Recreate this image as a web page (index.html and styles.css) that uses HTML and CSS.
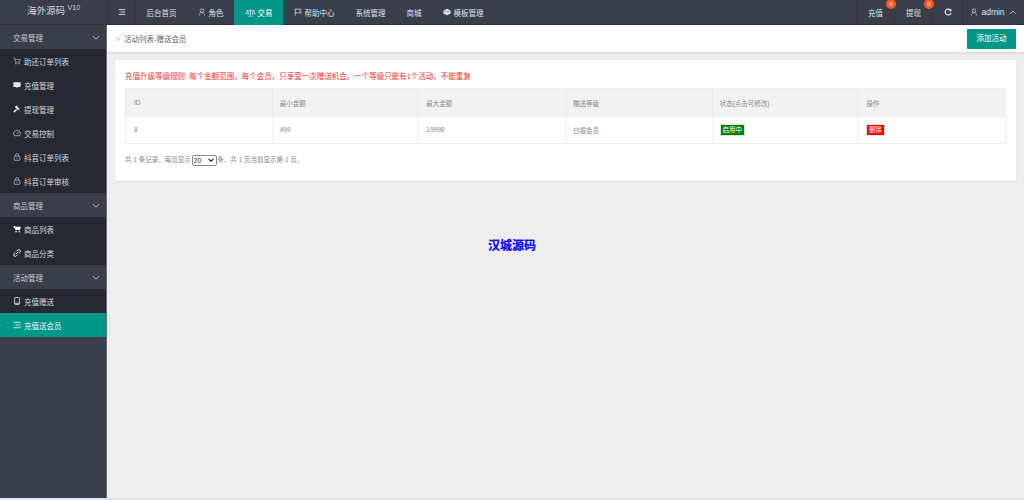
FILE: index.html
```html
<!DOCTYPE html>
<html lang="zh-CN">
<head>
    <meta charset="UTF-8">
    <meta name="viewport" content="width=device-width, initial-scale=1.0">
    <title>活动列表-赠送会员</title>
    <link rel="stylesheet" href="styles.css">
</head>
<body>

<div class="layout">
    <header class="topbar">
        <div class="logo">海外源码 <sup>V10</sup></div>
        <button class="toggle" aria-label="菜单">
            <svg class="icon" viewBox="0 0 10 10"><path d="M1 2h8M3 5h6M1 8h8" stroke="#dfe1e6" stroke-width="1.1" fill="none"/></svg>
        </button>
        <nav class="top-nav">
            <a href="#">后台首页</a>
            <a href="#"><svg class="icon" viewBox="0 0 10 10"><circle cx="5" cy="3.2" r="2.2" stroke="#dfe1e6" fill="none" stroke-width=".8"/><path d="M1.5 9.5C2 6.8 3.2 5.6 5 5.6s3 1.2 3.5 3.9" stroke="#dfe1e6" fill="none" stroke-width=".8"/></svg>角色</a>
            <a href="#" class="active"><svg class="icon wide" viewBox="0 0 14 10"><path d="M7 1v7M4 9h6M2 2h10M3 2 1 6h4zM11 2 9 6h4z" stroke="#fff" fill="none" stroke-width=".8"/></svg>交易</a>
            <a href="#"><svg class="icon" viewBox="0 0 10 10"><path d="M1.5 1v8.5M1.5 1.5h7.5L7.5 3.5 9 6H1.5" stroke="#dfe1e6" fill="none" stroke-width=".9"/></svg>帮助中心</a>
            <a href="#">系统管理</a>
            <a href="#">商城</a>
            <a href="#"><svg class="icon" viewBox="0 0 10 10"><path d="M5 1 9.5 3v4L5 9 .5 7V3z" fill="#dfe1e6"/><path d="M.5 3 5 5l4.5-2" stroke="#3a3d4a" fill="none" stroke-width=".5"/></svg>模板管理</a>
        </nav>
        <div class="top-right">
            <a href="#" class="cell">充值<span class="badge">0</span></a>
            <a href="#" class="cell">提现<span class="badge">0</span></a>
            <a href="#" class="cell refresh"><svg class="icon" viewBox="0 0 10 10"><path d="M8.3 3.2A3.7 3.7 0 1 0 8.7 6" stroke="#fff" fill="none" stroke-width="1.3"/><path d="M9.2.8v3.4H5.8z" fill="#fff"/></svg></a>
            <a href="#" class="cell user"><svg class="icon" viewBox="0 0 10 10"><circle cx="5" cy="3.2" r="2.2" stroke="#dfe1e6" fill="none" stroke-width=".8"/><path d="M1.5 9.5C2 6.8 3.2 5.6 5 5.6s3 1.2 3.5 3.9" stroke="#dfe1e6" fill="none" stroke-width=".8"/></svg>admin<svg class="chev" viewBox="0 0 10 6"><path d="M1 5l4-4 4 4" stroke="#dfe1e6" fill="none" stroke-width=".9"/></svg></a>
        </div>
    </header>

    <div class="body-row">
        <aside class="sidebar">
            <div class="group">交易管理<svg class="chev" viewBox="0 0 10 6"><path d="M1 1l4 4 4-4" stroke="#c9ccd4" fill="none" stroke-width="1"/></svg></div>
            <a href="#" class="item"><svg class="icon" viewBox="0 0 10 10"><path d="M.5 1.5h1.6l1 5h5l1-3.5H2.6" stroke="#d5d7dd" fill="none" stroke-width=".7"/><circle cx="3.6" cy="8.4" r=".8" fill="#d5d7dd"/><circle cx="7.6" cy="8.4" r=".8" fill="#d5d7dd"/></svg>助还订单列表</a>
            <a href="#" class="item"><svg class="icon" viewBox="0 0 10 10"><path d="M.5 1.5h9v6H6l-1 1.5-1-1.5H.5z" fill="#e4e6ea"/></svg>充值管理</a>
            <a href="#" class="item"><svg class="icon" viewBox="0 0 10 10"><path d="M4 .8 8 4.6 6.4 6.2 2.6 2.4zM4 5 .6 8.4l1 1L5 6zM7.5 6.5 9.5 8.5" fill="#fff" stroke="#fff" stroke-width=".4"/></svg>提现管理</a>
            <a href="#" class="item"><svg class="icon" viewBox="0 0 10 10"><path d="M1.6 8.4a4.3 4.3 0 1 1 6.8 0z" stroke="#d5d7dd" fill="none" stroke-width=".8"/><path d="M4.6 6.4 7 3.8" stroke="#d5d7dd" stroke-width=".8"/></svg>交易控制</a>
            <a href="#" class="item"><svg class="icon" viewBox="0 0 10 10"><rect x="1.5" y="4" width="7" height="5.2" rx=".8" stroke="#d5d7dd" fill="none" stroke-width=".8"/><path d="M3 4V2.8a2 2 0 0 1 4 0V4M5 6v1.4" stroke="#d5d7dd" fill="none" stroke-width=".8"/></svg>抖音订单列表</a>
            <a href="#" class="item"><svg class="icon" viewBox="0 0 10 10"><rect x="1.5" y="4" width="7" height="5.2" rx=".8" stroke="#d5d7dd" fill="none" stroke-width=".8"/><path d="M3 4V2.8a2 2 0 0 1 4 0V4M5 6v1.4" stroke="#d5d7dd" fill="none" stroke-width=".8"/></svg>抖音订单审核</a>
            <div class="group">商品管理<svg class="chev" viewBox="0 0 10 6"><path d="M1 1l4 4 4-4" stroke="#c9ccd4" fill="none" stroke-width="1"/></svg></div>
            <a href="#" class="item"><svg class="icon" viewBox="0 0 10 10"><path d="M.3 1.3h2l.4 1h7l-1 4H3.2z" fill="#fff"/><circle cx="3.8" cy="8.3" r="1" fill="#fff"/><circle cx="7.8" cy="8.3" r="1" fill="#fff"/></svg>商品列表</a>
            <a href="#" class="item"><svg class="icon" viewBox="0 0 10 10"><path d="M4.4 2.8 5.8 1.4a1.9 1.9 0 0 1 2.8 2.8L7.2 5.6M5.6 7.2 4.2 8.6A1.9 1.9 0 0 1 1.4 5.8L2.8 4.4M3.6 6.4l2.8-2.8" stroke="#fff" fill="none" stroke-width="1.2"/></svg>商品分类</a>
            <div class="group">活动管理<svg class="chev" viewBox="0 0 10 6"><path d="M1 1l4 4 4-4" stroke="#c9ccd4" fill="none" stroke-width="1"/></svg></div>
            <a href="#" class="item"><svg class="icon" viewBox="0 0 10 10"><rect x="2" y=".6" width="6" height="8.8" rx=".9" stroke="#e4e6ea" fill="none" stroke-width="1"/><path d="M2 7.8h6" stroke="#e4e6ea" stroke-width="1"/></svg>充值赠送</a>
            <a href="#" class="item current"><svg class="icon" viewBox="0 0 10 10"><path d="M.5 1.6h9M3 5h6.5M.5 8.4h9M.5 5h1" stroke="#e8f5f2" stroke-width="1.1" fill="none"/></svg>充值送会员</a>
        </aside>

        <main class="main">
            <div class="crumb-bar">
                <div class="crumb"><svg class="crumb-arrow" viewBox="0 0 8 8"><path d="M1 1l3 3-3 3M4 1l3 3-3 3" stroke="#aaa" fill="none" stroke-width=".9"/></svg>活动列表-赠送会员</div>
                <a href="#" class="btn-add">添加活动</a>
            </div>
            <section class="card">
                <p class="rule">充值升级等级规则: 每个金额范围，每个会员，只享受一次赠送机会。一个等级只能有1个活动，不能重复</p>
                <table class="list">
                    <thead>
                        <tr>
                            <th>ID</th>
                            <th>最小金额</th>
                            <th>最大金额</th>
                            <th>赠送等级</th>
                            <th>状态(点击可修改)</th>
                            <th>操作</th>
                        </tr>
                    </thead>
                    <tbody>
                        <tr>
                            <td>8</td>
                            <td>499</td>
                            <td>19998</td>
                            <td>白银会员</td>
                            <td><span class="tag on">启用中</span></td>
                            <td><span class="tag del">删除</span></td>
                        </tr>
                    </tbody>
                </table>
                <div class="pager">共 1 条记录，每页显示 <select class="page-size"><option>20</option></select> 条，共 1 页当前显示第 1 页。</div>
            </section>
        </main>
    </div>
    <div class="bottom-line"></div>
</div>

<div class="watermark">汉城源码</div>

</body>
</html>
```
FILE: styles.css
```css
* { box-sizing: border-box; }
html, body { margin: 0; padding: 0; height: 100%; overflow: hidden; }
body { font-family: "Liberation Sans", "Noto Sans CJK SC", sans-serif; font-size: 7.5px; color: #666; background: #eee; position: relative; }
a { text-decoration: none; color: inherit; }

.layout { display: flex; flex-direction: column; height: 500px; }

.topbar { display: flex; height: 25px; flex: none; background: #3a3d4a; border-bottom: 1px solid #30323d; color: #dfe1e6; }
.logo { width: 107px; font-size: 9.5px; line-height: 22px; text-align: center; color: #d3d5da; }
.logo sup { font-size: 7px; line-height: 0; }
.toggle { width: 29px; padding: 0; background: none; border: 0; border-left: 1px solid #353844; border-right: 1px solid #353844; display: flex; align-items: center; justify-content: center; }
.icon { width: 8px; height: 8px; flex: none; margin-right: 3px; }
.icon.wide { width: 11px; margin-right: 2px; }
.toggle .icon { margin: 0; }

.top-nav { display: flex; flex: 1; }
.top-nav a { display: flex; align-items: center; padding: 0 10.5px; }
.top-nav a.active { background: #009688; color: #fff; height: 25px; }

.top-right { display: flex; }
.cell { position: relative; display: flex; align-items: center; justify-content: center; border-left: 1px solid #353844; width: 38px; }
.cell.refresh { width: 30px; }
.cell.refresh .icon { margin: 0; }
.cell.user { width: 62px; font-size: 8.5px; }
.chev { width: 8px; height: 5px; margin-left: 4px; }
.badge { position: absolute; top: -1px; right: -2px; width: 10px; height: 10px; border-radius: 50%; background: #ff5722; color: #fff; font-size: 6px; line-height: 10px; text-align: center; z-index: 1; }

.body-row { display: flex; flex: 1; min-height: 0; }

.sidebar { width: 107px; flex: none; background: #3a3d4a; border-right: 1px solid #6b6e79; color: #d5d7dd; }
.group { height: 24px; display: flex; align-items: center; justify-content: space-between; padding: 0 6px 0 13px; color: #c9ccd4; }
.item { height: 24px; display: flex; align-items: center; padding-left: 13px; background: #262932; color: #d5d7dd; }
.item.current { background: #009688; color: #e8f5f2; }

.main { flex: 1; min-width: 0; }
.crumb-bar { height: 27px; background: #fff; display: flex; align-items: center; justify-content: space-between; padding-right: 8px; box-shadow: 0 1px 2px rgba(0, 0, 0, .12); color: #666; }
.crumb { display: flex; align-items: center; padding-left: 8px; }
.crumb-arrow { width: 6px; height: 6px; margin-right: 3px; }
.btn-add { width: 49px; height: 20px; line-height: 20px; text-align: center; background: #009688; color: #fff; border-radius: 1px; }

.card { margin: 8px 8px 0; height: 121px; background: #fff; padding: 10px 10px 0; box-shadow: 0 1px 2px rgba(0, 0, 0, .1); }
.rule { margin: 0 0 6px; height: 12px; line-height: 13px; color: #f33; font-size: 7.5px; white-space: nowrap; }

.list { width: 100%; border-collapse: collapse; table-layout: fixed; border: 1px solid #eee; font-size: 6.5px; color: #888; }
.list th { height: 28px; background: #f2f2f2; font-weight: normal; text-align: left; padding: 0 7px; border-left: 1px solid #e8e8e8; }
.list td { height: 27px; padding: 0 7px; border-left: 1px solid #eee; }
.list th:first-child, .list td:first-child { padding-left: 8px; }

.tag { display: inline-block; height: 12px; line-height: 10px; padding: 0 1.75px; color: #fff; border: 1px solid #ddd; border-radius: 1px; }
.tag.on { background: green; }
.tag.del { background: red; }

.pager { margin-top: 10px; font-size: 6.5px; line-height: 12px; color: #888; white-space: nowrap; }
.page-size { width: 25px; height: 11px; margin: 0 -1px; padding: 0 0 0 1px; vertical-align: middle; appearance: none; font-size: 7px; font-family: "Liberation Sans", sans-serif; background: #fff url("data:image/svg+xml,%3Csvg xmlns='http://www.w3.org/2000/svg' viewBox='0 0 10 6'%3E%3Cpath d='M1 1l4 4 4-4' stroke='%23222' fill='none' stroke-width='2'/%3E%3C/svg%3E") no-repeat right 2px center / 6px 4px; border: 1px solid #888; border-radius: 2px; color: #333; }

.bottom-line { height: 2px; flex: none; background: #d5e7f1; }

.watermark { position: absolute; left: 0; right: 0; top: 238px; text-align: center; font-size: 12px; line-height: 16px; font-weight: bold; color: #00f; -webkit-text-stroke: .2px #00f; }
```
